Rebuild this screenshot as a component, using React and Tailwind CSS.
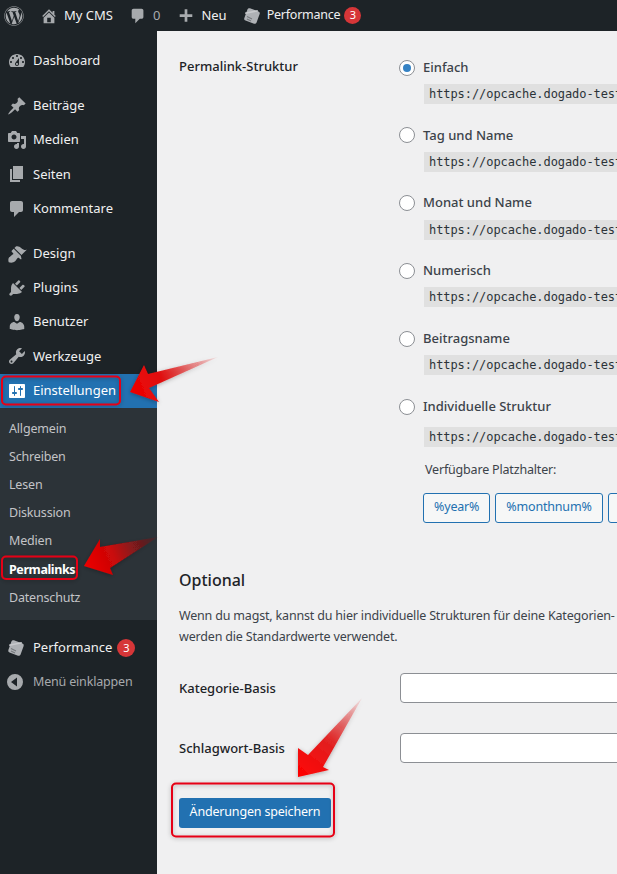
import { FaWordpress } from "react-icons/fa";

const font = "font-['Noto_Sans',sans-serif]";
// body text in the reference runs narrower than the menu labels
const small = "text-[12.5px] tracking-[-0.18px]";

const paths = {
    dashboard: "M3.76 16h12.48c1.1-1.37 1.76-3.11 1.76-5 0-4.42-3.58-8-8-8s-8 3.58-8 8c0 1.89.66 3.63 1.76 5zM10 4c.55 0 1 .45 1 1s-.45 1-1 1-1-.45-1-1 .45-1 1-1zM6 6c.55 0 1 .45 1 1s-.45 1-1 1-1-.45-1-1 .45-1 1-1zm8 0c.55 0 1 .45 1 1s-.45 1-1 1-1-.45-1-1 .45-1 1-1zm-5.37 5.55L12 7v6c0 1.1-.9 2-2 2s-2-.9-2-2c0-.57.24-1.08.63-1.45zM4 10c.55 0 1 .45 1 1s-.45 1-1 1-1-.45-1-1 .45-1 1-1zm12 0c.55 0 1 .45 1 1s-.45 1-1 1-1-.45-1-1 .45-1 1-1zm-5 3c0-.55-.45-1-1-1s-1 .45-1 1 .45 1 1 1 1-.45 1-1z",
    post: "M10.44 3.02l1.82-1.82 6.36 6.35-1.83 1.82c-1.05-.68-2.48-.57-3.41.36l-.75.75c-.92.93-1.04 2.35-.35 3.41l-1.83 1.82-2.41-2.41-2.8 2.79c-.42.42-3.38 2.71-3.8 2.29s1.86-3.39 2.28-3.81l2.79-2.79L4.1 9.36l1.83-1.82c1.05.69 2.48.57 3.4-.36l.75-.75c.93-.92 1.05-2.35.36-3.41z",
    media: "M13 11V4c0-.55-.45-1-1-1h-1.67L9 1H5L3.67 3H2c-.55 0-1 .45-1 1v7c0 .55.45 1 1 1h10c.55 0 1-.45 1-1zM7 4.5c1.38 0 2.5 1.12 2.5 2.5S8.38 9.5 7 9.5 4.5 8.38 4.5 7 5.62 4.5 7 4.5zM14 6h5v10.5c0 1.38-1.12 2.5-2.5 2.5S14 17.88 14 16.5s1.12-2.5 2.5-2.5c.17 0 .34.02.5.05V9h-3V6zm-4 8.05V13h2v3.5c0 1.38-1.12 2.5-2.5 2.5S7 17.88 7 16.5 8.12 14 9.5 14c.17 0 .34.02.5.05z",
    page: "M6 15V2h10v13H6zm-1 1h8v2H3V5h2v11z",
    comment: "M5 2h9c1.1 0 2 .9 2 2v7c0 1.1-.9 2-2 2h-2l-5 5v-5H5c-1.1 0-2-.9-2-2V4c0-1.1.9-2 2-2z",
    appearance: "M14.48 11.06L7.41 3.99l1.5-1.5c.5-.56 2.3-.47 3.51.32 1.21.8 1.43 1.28 2.91 2.1 1.18.64 2.45 1.26 4.45.85zm-.71.71L6.7 4.7 4.93 6.47c-.39.39-.39 1.02 0 1.41l1.06 1.06c.39.39.39 1.03 0 1.42-.6.6-1.43 1.11-2.21 1.69-.35.26-.7.53-1.01.84C1.43 13.23.91 15.82 1.75 18.25c2.44.85 5.03.33 6.37-1.01.31-.31.58-.66.84-1.01.58-.78 1.09-1.61 1.69-2.21.39-.39 1.02-.39 1.41 0l1.06 1.06c.39.39 1.02.39 1.41 0z",
    plugin: "M13.11 4.36L9.87 7.6 8 5.73l3.24-3.24c.35-.34 1.05-.2 1.56.32.52.51.66 1.21.31 1.55zm-8 1.77l.91-1.12 9.01 9.01-1.19.84c-.71.71-2.63 1.16-3.82 1.16H6.14L4.9 17.26c-.59.59-1.54.59-2.12 0-.59-.58-.59-1.53 0-2.12l1.24-1.24v-3.88c0-1.13.4-3.19 1.09-3.89zm7.26 3.97l3.24-3.24c.34-.35 1.04-.21 1.55.31.52.51.66 1.21.31 1.55l-3.24 3.25z",
    users: "M10 9.25c-2.27 0-2.73-3.44-2.73-3.44C7 4.02 7.82 2 9.97 2c2.16 0 2.98 2.02 2.71 3.81 0 0-.41 3.44-2.68 3.44zm0 2.57L12.72 10c2.39 0 4.52 2.33 4.52 4.53v2.49s-3.65 1.13-7.24 1.13c-3.65 0-7.24-1.13-7.24-1.13v-2.49c0-2.25 1.94-4.48 4.47-4.48z",
    tools: "M16.68 9.77c-1.34 1.34-3.3 1.67-4.95.99l-5.41 6.52c-.99.99-2.59.99-3.58 0s-.99-2.59 0-3.57l6.52-5.42c-.68-1.65-.35-3.61.99-4.95 1.28-1.28 3.12-1.62 4.72-1.06l-2.89 2.89 2.82 2.82 2.86-2.87c.53 1.58.18 3.39-1.08 4.65zM3.81 16.21c.4.39 1.04.39 1.43 0 .4-.4.4-1.04 0-1.43-.39-.4-1.03-.4-1.43 0-.39.39-.39 1.03 0 1.43z",
    settings: "M18 16V4c0-.55-.45-1-1-1H3c-.55 0-1 .45-1 1v12c0 .55.45 1 1 1h14c.55 0 1-.45 1-1zM8 11h1c.55 0 1 .45 1 1s-.45 1-1 1H8v1.5c0 .28-.22.5-.5.5s-.5-.22-.5-.5V13H6c-.55 0-1-.45-1-1s.45-1 1-1h1V5.5c0-.28.22-.5.5-.5s.5.22.5.5V11zm5-2h-1c-.55 0-1-.45-1-1s.45-1 1-1h1V5.5c0-.28.22-.5.5-.5s.5.22.5.5V7h1c.55 0 1 .45 1 1s-.45 1-1 1h-1v5.5c0 .28-.22.5-.5.5s-.5-.22-.5-.5V9z",
    home: "M16 8.5l1.53 1.53-1.06 1.06L10 4.62l-6.47 6.47-1.06-1.06L10 2.5l4 4v-2h2v4zm-6-2.46l6 5.99V18H4v-5.97zM12 17v-5H8v5h4z",
    plus: "M17 8v3h-5.5v5.5h-3V11H3V8h5.5V2.500h3V8z",
    collapse: "M10 2a8 8 0 1 0 0 16 8 8 0 0 0 0-16zm2 3.500v9L6 10z",
};

function Dash({ name, className = "w-5 h-5 text-[#a7aaad]" }) {
    return (
        <svg viewBox="0 0 20 20" fill="currentColor" className={className}>
            <path fillRule="evenodd" d={paths[name]} />
        </svg>
    );
}

// the little grey box of the performance plugin
function PerfIcon({ className }) {
    return (
        <svg viewBox="0 0 20 20" className={className}>
            <rect x="3.500" y="3.500" width="13" height="13" rx="2" transform="rotate(20 10 10)" fill="#aeb1b5" />
            <path d="M3.200 7.200L15.800 4.800" fill="none" stroke="#c8cacd" strokeWidth="1.600" />
            <path d="M5 10.500l5 2.500M5 13l4 2" fill="none" stroke="#74787c" strokeWidth="1.100" />
        </svg>
    );
}

function Badge({ className = "w-[17px] h-[17px]" }) {
    return (
        <span className={`flex items-center justify-center rounded-full bg-[#d63638] text-white text-[11px] tracking-normal ${className}`}>
            3
        </span>
    );
}

function MenuItem({ icon, label, active, gap }) {
    return (
        <div className={`flex items-center h-[34.3px] pl-[7px] ${active ? "bg-[#2271b1] text-white" : "text-[#f0f0f1]"} ${gap ? "mb-[10.7px]" : ""}`}>
            <Dash name={icon} className={`w-5 h-5 ${active ? "text-white" : "text-[#a7aaad]"}`} />
            <span className="ml-[6px]">{label}</span>
        </div>
    );
}

function Sidebar() {
    const sub = ["Allgemein", "Schreiben", "Lesen", "Diskussion", "Medien", "Permalinks", "Datenschutz"];

    return (
        <aside className="w-[157px] shrink-0 bg-[#1d2327] text-[13px] pt-[12.6px]">
            <MenuItem icon="dashboard" label="Dashboard" gap />
            <MenuItem icon="post" label="Beiträge" />
            <MenuItem icon="media" label="Medien" />
            <MenuItem icon="page" label="Seiten" />
            <MenuItem icon="comment" label="Kommentare" gap />
            <MenuItem icon="appearance" label="Design" />
            <MenuItem icon="plugin" label="Plugins" />
            <MenuItem icon="users" label="Benutzer" />
            <MenuItem icon="tools" label="Werkzeuge" />
            <MenuItem icon="settings" label="Einstellungen" active />

            {/* SUBMENU */}
            <div className={`bg-[#2c3338] pt-[7px] pb-[7.4px] mb-[11px] ${small}`}>
                {sub.map((item) => (
                    <div
                        key={item}
                        className={`flex items-center h-[28.2px] pl-[9px] ${item === "Permalinks" ? "font-bold text-white tracking-[-0.4px]" : "text-[#c3c4c7]"}`}
                    >
                        {item}
                    </div>
                ))}
            </div>

            <div className="flex items-center h-[34.3px] pl-[6px] text-[#f0f0f1]">
                <PerfIcon className="w-[20px] h-[20px]" />
                <span className="ml-[7px]">Performance</span>
                <span className="ml-[5px]"><Badge className="w-[18px] h-[18px]" /></span>
            </div>
            <div className="flex items-center h-[34.3px] pl-[5px] text-[#a7aaad]">
                <Dash name="collapse" className="w-5 h-5 text-[#a7aaad]" />
                <span className={`ml-[8px] ${small}`}>Menü einklappen</span>
            </div>
        </aside>
    );
}

function AdminBar() {
    return (
        <header className="flex items-center h-[31px] bg-[#1d2327] text-[13px] text-[#f0f0f1] shrink-0">
            <FaWordpress className="ml-[4px] w-[20px] h-[20px] text-[#a7aaad]" />
            <Dash name="home" className="ml-[16px] w-[18px] h-[18px] text-[#a7aaad]" />
            <span className="ml-[6px]">My CMS</span>
            <Dash name="comment" className="ml-[16px] w-[18px] h-[18px] text-[#a7aaad]" />
            <span className="ml-[6px] text-[#a7aaad]">0</span>
            <Dash name="plus" className="ml-[17px] w-[18px] h-[18px] text-[#a7aaad]" />
            <span className="ml-[6px]">Neu</span>
            <PerfIcon className="ml-[15px] w-[20px] h-[20px]" />
            <span className="ml-[5px] text-[12.5px] tracking-[-0.23px]">Performance</span>
            <span className="ml-[4px]"><Badge /></span>
        </header>
    );
}

function PermalinkOption({ label, checked, url, codeGap = "mt-[8.5px]" }) {
    return (
        <div className="h-[67.8px]">
            <div className="flex items-center h-[16px]">
                <span className="flex items-center justify-center w-4 h-4 rounded-full border border-[#8c8f94] bg-white">
                    {checked && <span className="w-2 h-2 rounded-full bg-[#3582c4]" />}
                </span>
                <span className="ml-[8px] font-medium text-[#3c434a]">{label}</span>
            </div>
            <div className={`ml-[25px] ${codeGap} h-[20px] w-[400px] flex items-center bg-[#e0e0e0] pl-[5px] font-['DejaVu_Sans_Mono',monospace] text-[12px] tracking-[-0.07px] text-[#2c3338] whitespace-nowrap`}>
                {url}
            </div>
        </div>
    );
}

function Tag({ label }) {
    return (
        <button className={`h-[30px] px-[10px] shrink-0 rounded-[3px] border border-[#2271b1] bg-[#f6f7f7] text-[#2271b1] ${small}`}>
            {label}
        </button>
    );
}

function Content() {
    return (
        <main className="flex-1 min-w-0 overflow-hidden bg-[#f0f0f1] pl-[22px] pt-[28px] text-[13px] text-[#3c434a]">
            <div className="flex w-[700px]">
                <div className="w-[221px] shrink-0 font-medium text-[#1d2327] leading-[14px]">Permalink-Struktur</div>
                <div className="-ml-px pt-[0.6px]">
                    <PermalinkOption label="Einfach" checked url="https://opcache.dogado-test.de/?p=123" />
                    <PermalinkOption label="Tag und Name" url="https://opcache.dogado-test.de/2024/05/14/beispiel/" />
                    <PermalinkOption label="Monat und Name" url="https://opcache.dogado-test.de/2024/05/beispiel/" />
                    <PermalinkOption label="Numerisch" url="https://opcache.dogado-test.de/archives/123" />
                    <PermalinkOption label="Beitragsname" url="https://opcache.dogado-test.de/beispiel/" />
                    <PermalinkOption label="Individuelle Struktur" codeGap="mt-[12px]" url="https://opcache.dogado-test.de/%postname%/" />
                    <div className={`ml-[26px] -mt-[5.6px] leading-[18px] ${small}`}>Verfügbare Platzhalter:</div>
                    <div className="ml-[24px] mt-[14px] flex gap-[5px]">
                        <Tag label="%year%" />
                        <Tag label="%monthnum%" />
                        <Tag label="%day%" />
                    </div>
                </div>
            </div>

            <h2 className="mt-[45px] text-[16px] leading-[24px] font-medium text-[#1d2327]">Optional</h2>
            <p className={`mt-[13px] w-[700px] leading-[21px] ${small}`}>
                Wenn du magst, kannst du hier individuelle Strukturen für deine Kategorien- und Schlagwort-URLs<br />
                werden die Standardwerte verwendet.
            </p>

            <div className="flex items-center mt-[26px] h-[30px]">
                <label className="w-[221px] shrink-0 pt-[2px] font-medium text-[#1d2327]">Kategorie-Basis</label>
                <input className="w-[300px] h-[30px] shrink-0 bg-white border border-[#8c8f94] rounded-[4px]" />
            </div>
            <div className="flex items-center mt-[30px] h-[30px]">
                <label className="w-[221px] shrink-0 pt-[2px] font-medium text-[#1d2327]">Schlagwort-Basis</label>
                <input className="w-[300px] h-[30px] shrink-0 bg-white border border-[#8c8f94] rounded-[4px]" />
            </div>

            <button className={`mt-[35px] w-[152px] h-[30px] bg-[#2271b1] rounded-[3px] text-white ${small}`}>
                Änderungen speichern
            </button>
        </main>
    );
}

// red arrows and frames somebody drew on top of the screenshot
function Annotations() {
    return (
        <svg width="617" height="874" className="absolute left-0 top-0 pointer-events-none">
            <defs>
                <linearGradient id="a1" gradientUnits="userSpaceOnUse" x1="130" y1="392" x2="218" y2="357">
                    <stop offset="0" stopColor="#ee0000" />
                    <stop offset="0.35" stopColor="#e01010" />
                    <stop offset="1" stopColor="#e01010" stopOpacity="0.05" />
                </linearGradient>
                <linearGradient id="a2" gradientUnits="userSpaceOnUse" x1="84" y1="566" x2="158" y2="537">
                    <stop offset="0" stopColor="#ee0000" />
                    <stop offset="0.4" stopColor="#c80808" />
                    <stop offset="1" stopColor="#a01010" stopOpacity="0.1" />
                </linearGradient>
                <linearGradient id="a3" gradientUnits="userSpaceOnUse" x1="298" y1="777" x2="362" y2="698">
                    <stop offset="0" stopColor="#ff0000" />
                    <stop offset="0.45" stopColor="#e22020" />
                    <stop offset="1" stopColor="#e22020" stopOpacity="0.05" />
                </linearGradient>
                <filter id="sh" x="-20%" y="-20%" width="140%" height="140%">
                    <feDropShadow dx="0" dy="1" stdDeviation="2" floodColor="#000" floodOpacity="0.3" />
                </filter>
            </defs>
            <polygon points="130,392 144,365 148,374 218,357 149,388 159,402" fill="url(#a1)" filter="url(#sh)" />
            <polygon points="84,566 100,539 100,547 158,537 110,568 113,575" fill="url(#a2)" filter="url(#sh)" />
            <polygon points="298,777 298,748 308,755 362,698 323,767 329,770" fill="url(#a3)" filter="url(#sh)" />
            <g fill="none" stroke="#e60012" strokeWidth="2" filter="url(#sh)">
                <rect x="2" y="376.500" width="118" height="28" rx="4" />
                <rect x="2" y="556.500" width="75" height="22.500" rx="4" />
                <rect x="172" y="783.500" width="162" height="53" rx="4" />
            </g>
        </svg>
    );
}

export default function App() {
    return (
        <div className={`relative flex flex-col w-[617px] h-[874px] overflow-hidden ${font}`}>
            <AdminBar />
            <div className="flex flex-1 min-h-0">
                <Sidebar />
                <Content />
            </div>
            <Annotations />
        </div>
    );
}
